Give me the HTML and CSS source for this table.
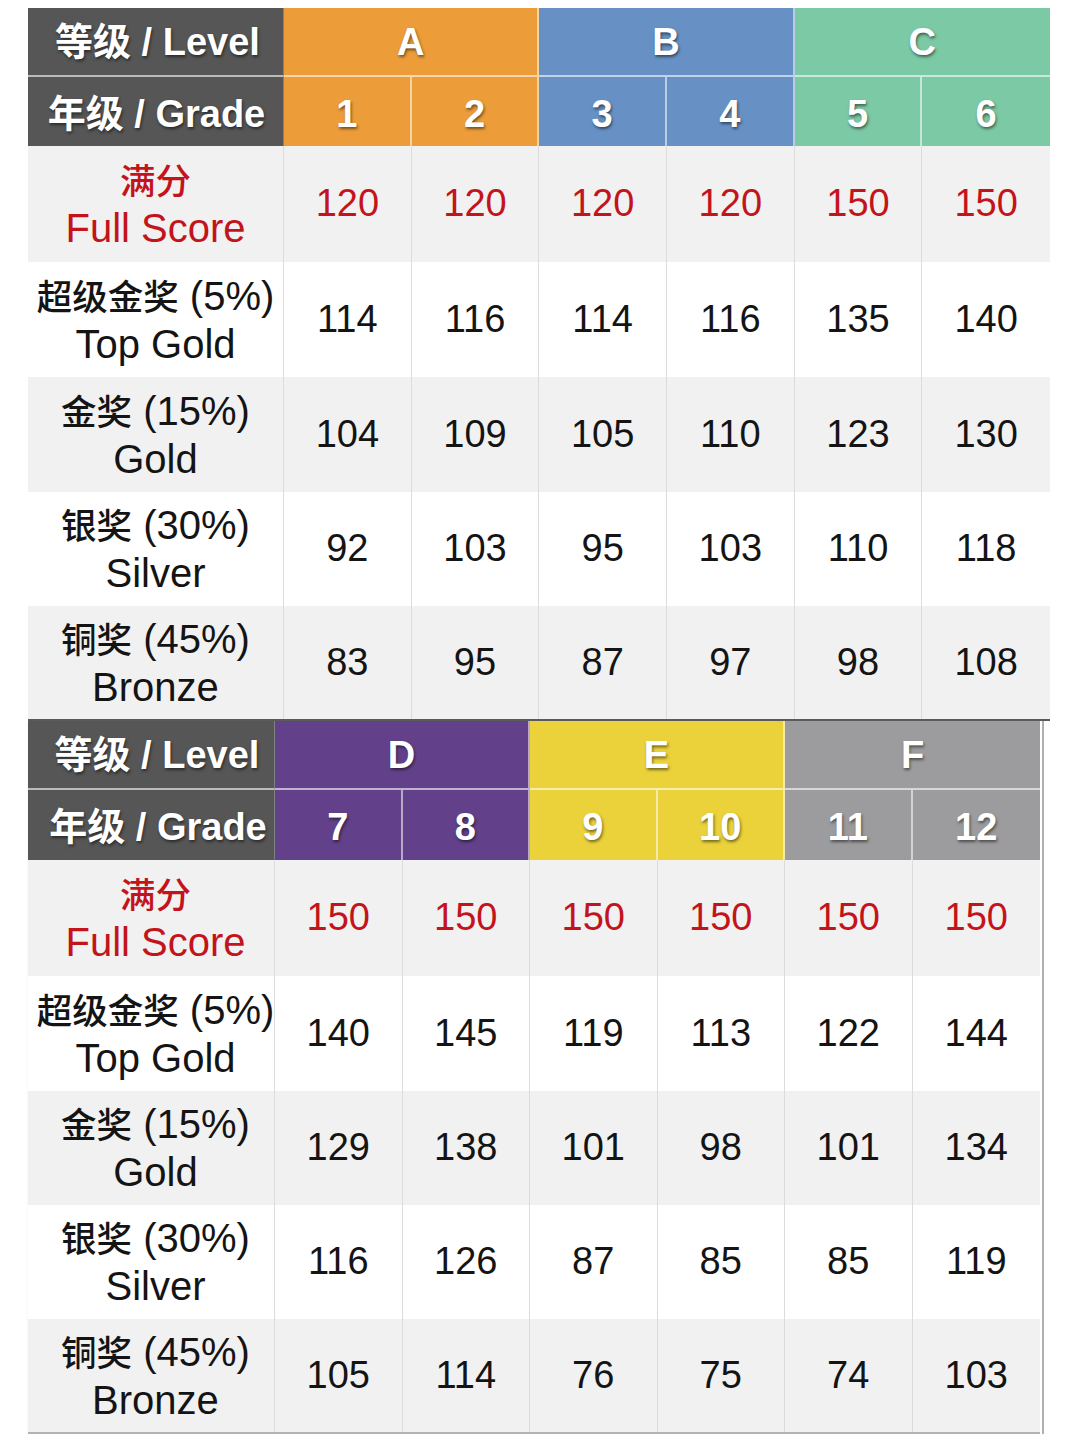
FILE: index.html
```html
<!DOCTYPE html>
<html lang="zh-CN">
<head>
<meta charset="utf-8">
<title>等级分数线 / Score Cutoffs</title>
<link rel="stylesheet" href="styles.css">
</head>
<body>
<main class="page">
  <section class="tbl tbl-1">
    <div class="c hd lbl">等级 / Level</div>
    <div class="c hd lv orange span2">A</div>
    <div class="c hd lv blue span2">B</div>
    <div class="c hd lv green span2 last">C</div>

    <div class="c hd lbl r2">年级 / Grade</div>
    <div class="c hd orange r2">1</div>
    <div class="c hd orange r2">2</div>
    <div class="c hd blue r2">3</div>
    <div class="c hd blue r2">4</div>
    <div class="c hd green r2">5</div>
    <div class="c hd green r2 last">6</div>

    <div class="c name red gray"><p class="lines"><span class="zh">满分</span><br>Full Score</p></div>
    <div class="c num red gray">120</div>
    <div class="c num red gray">120</div>
    <div class="c num red gray">120</div>
    <div class="c num red gray">120</div>
    <div class="c num red gray">150</div>
    <div class="c num red gray last">150</div>

    <div class="c name"><p class="lines"><span class="zh">超级金奖</span> (5%)<br>Top Gold</p></div>
    <div class="c num">114</div>
    <div class="c num">116</div>
    <div class="c num">114</div>
    <div class="c num">116</div>
    <div class="c num">135</div>
    <div class="c num last">140</div>

    <div class="c name gray"><p class="lines"><span class="zh">金奖</span> (15%)<br>Gold</p></div>
    <div class="c num gray">104</div>
    <div class="c num gray">109</div>
    <div class="c num gray">105</div>
    <div class="c num gray">110</div>
    <div class="c num gray">123</div>
    <div class="c num gray last">130</div>

    <div class="c name"><p class="lines"><span class="zh">银奖</span> (30%)<br>Silver</p></div>
    <div class="c num">92</div>
    <div class="c num">103</div>
    <div class="c num">95</div>
    <div class="c num">103</div>
    <div class="c num">110</div>
    <div class="c num last">118</div>

    <div class="c name gray"><p class="lines"><span class="zh">铜奖</span> (45%)<br>Bronze</p></div>
    <div class="c num gray">83</div>
    <div class="c num gray">95</div>
    <div class="c num gray">87</div>
    <div class="c num gray">97</div>
    <div class="c num gray">98</div>
    <div class="c num gray last">108</div>
  </section>

  <section class="tbl tbl-2">
    <div class="c hd lbl">等级 / Level</div>
    <div class="c hd lv purple span2">D</div>
    <div class="c hd lv yellow span2">E</div>
    <div class="c hd lv silver span2 last">F</div>

    <div class="c hd lbl r2">年级 / Grade</div>
    <div class="c hd purple r2">7</div>
    <div class="c hd purple r2">8</div>
    <div class="c hd yellow r2">9</div>
    <div class="c hd yellow r2">10</div>
    <div class="c hd silver r2">11</div>
    <div class="c hd silver r2 last">12</div>

    <div class="c name red gray"><p class="lines"><span class="zh">满分</span><br>Full Score</p></div>
    <div class="c num red gray">150</div>
    <div class="c num red gray">150</div>
    <div class="c num red gray">150</div>
    <div class="c num red gray">150</div>
    <div class="c num red gray">150</div>
    <div class="c num red gray last">150</div>

    <div class="c name"><p class="lines"><span class="zh">超级金奖</span> (5%)<br>Top Gold</p></div>
    <div class="c num">140</div>
    <div class="c num">145</div>
    <div class="c num">119</div>
    <div class="c num">113</div>
    <div class="c num">122</div>
    <div class="c num last">144</div>

    <div class="c name gray"><p class="lines"><span class="zh">金奖</span> (15%)<br>Gold</p></div>
    <div class="c num gray">129</div>
    <div class="c num gray">138</div>
    <div class="c num gray">101</div>
    <div class="c num gray">98</div>
    <div class="c num gray">101</div>
    <div class="c num gray last">134</div>

    <div class="c name"><p class="lines"><span class="zh">银奖</span> (30%)<br>Silver</p></div>
    <div class="c num">116</div>
    <div class="c num">126</div>
    <div class="c num">87</div>
    <div class="c num">85</div>
    <div class="c num">85</div>
    <div class="c num last">119</div>

    <div class="c name gray"><p class="lines"><span class="zh">铜奖</span> (45%)<br>Bronze</p></div>
    <div class="c num gray">105</div>
    <div class="c num gray">114</div>
    <div class="c num gray">76</div>
    <div class="c num gray">75</div>
    <div class="c num gray">74</div>
    <div class="c num gray last">103</div>
  </section>
</main>
</body>
</html>
```

FILE: styles.css
```css
* { box-sizing: border-box; }

html, body {
  margin: 0;
  padding: 0;
  background: #ffffff;
}

body {
  font-family: "Liberation Sans", "Noto Sans CJK SC", sans-serif;
  color: #141414;
}

.page {
  padding: 8px 0 0 28px;
  display: flex;
  flex-direction: column;
  align-items: flex-start;
}

.tbl {
  display: grid;
}

.tbl-1 {
  width: 1022px;
  grid-template-columns: 256px repeat(6, 1fr);
  grid-template-rows: 69px 69px 116px 115px 115px 114px 113px;
  border-bottom: 2px solid #5a5a5a;
}

.tbl-2 {
  width: 1012px;
  grid-template-columns: 247px repeat(6, 1fr);
  grid-template-rows: 69px 70px 116px 115px 114px 114px 113px;
  border-bottom: 2px solid #b3b3b3;
  box-shadow: 2px 0 0 #ffffff, 4px 0 0 #b0b0b0, 0 2px 2px rgba(0, 0, 0, 0.08);
}

.c {
  display: flex;
  align-items: center;
  justify-content: center;
  text-align: center;
  font-size: 38px;
  line-height: 46px;
  border-right: 1px solid #dcdcdc;
}

.c.last {
  border-right: none;
}

/* header cells */
.hd {
  color: #ffffff;
  font-weight: 700;
  text-shadow: 1px 2px 3px rgba(0, 0, 0, 0.5);
  border-right: 2px solid rgba(255, 255, 255, 0.55);
}

.hd.lv {
  border-bottom: 2px solid rgba(255, 255, 255, 0.6);
}

.hd.lbl {
  background: #565656;
  border-right: 1px solid rgba(255, 255, 255, 0.25);
  border-bottom: 2px solid rgba(255, 255, 255, 0.6);
  padding-left: 4px;
}

.hd.lbl.r2 {
  border-bottom: none;
  padding-left: 2px;
}

.tbl-2 .hd.lbl {
  padding-left: 12px;
}

.tbl-2 .hd.lbl.r2 {
  padding-left: 14px;
}

.hd.r2 {
  padding-top: 4px;
}

.span2 {
  grid-column: span 2;
}

.orange { background: #ec9d39; }
.blue   { background: #6791c5; }
.green  { background: #7cc9a6; }
.purple { background: #62418a; }
.yellow { background: #ebd23b; }
.silver { background: #9c9c9f; }

/* body cells */
.gray { background: #f1f1f1; }

.name {
  font-size: 40px;
  font-weight: 400;
}

.tbl-2 .name {
  padding-left: 9px;
}

.lines {
  margin: 0;
  white-space: nowrap;
}

.zh {
  font-size: 35.5px;
  font-weight: 500;
}

.red { color: #c3141b; }

.num {
  padding-bottom: 2px;
}
```
